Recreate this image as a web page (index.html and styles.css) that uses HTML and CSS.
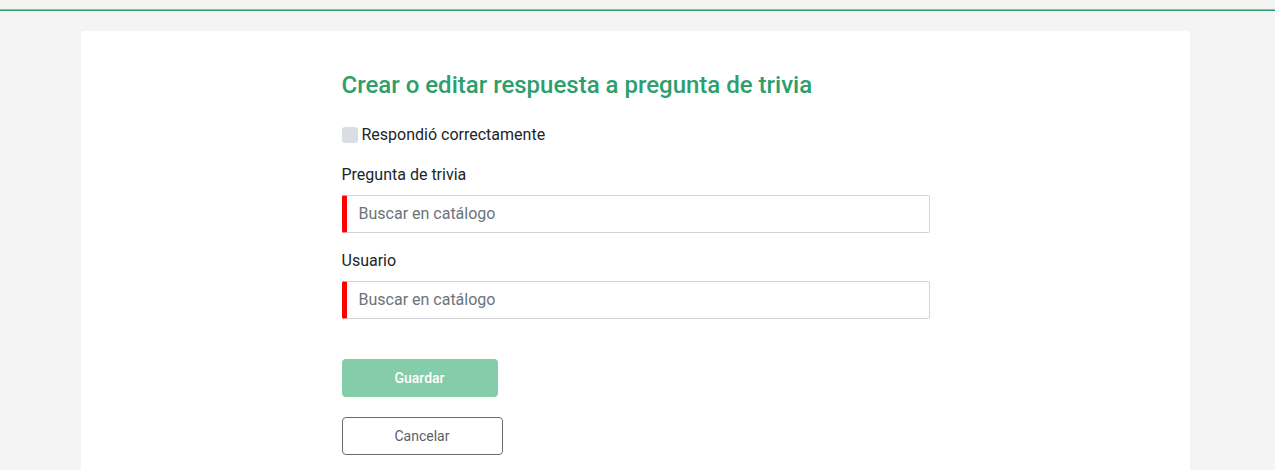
FILE: index.html
```html
<!DOCTYPE html>
<html lang="es">
<head>
<meta charset="utf-8">
<title>Crear o editar respuesta</title>
<link rel="stylesheet" href="styles.css">
</head>
<body>
<div class="topbar"></div>
<div class="topbar-accent"></div>
<main class="card">
  <form class="form">
    <h1 class="title">Crear o editar respuesta a pregunta de trivia</h1>
    <label class="check-row">
      <span class="checkbox"></span>
      <span>Respondió correctamente</span>
    </label>
    <div class="field">
      <label class="field-label">Pregunta de trivia</label>
      <input class="field-input" type="text" placeholder="Buscar en catálogo">
    </div>
    <div class="field">
      <label class="field-label">Usuario</label>
      <input class="field-input" type="text" placeholder="Buscar en catálogo">
    </div>
    <div class="actions">
      <button type="button" class="btn btn-primary">Guardar</button>
      <button type="button" class="btn btn-outline">Cancelar</button>
    </div>
  </form>
</main>
</body>
</html>
```
FILE: styles.css
```css
* { box-sizing: border-box; }
html, body { margin: 0; padding: 0; }
body {
  background: #f4f4f4;
  font-family: Roboto, "Liberation Sans", sans-serif;
  color: #212529;
  overflow: hidden;
}
.topbar {
  height: 10px;
  border-bottom: 1px solid #a9a9a9;
}
.topbar-accent {
  height: 1px;
  background: #2ea36e;
}
.card {
  background: #ffffff;
  margin: 20px 0 0 81px;
  width: 1109px;
  height: 439px;
  border-radius: 3px 3px 0 0;
  padding-top: 40px;
  display: flex;
  justify-content: center;
  overflow: hidden;
}
.form {
  width: 588px;
  display: flex;
  flex-direction: column;
}
.title {
  margin: 0;
  font-size: 24px;
  line-height: 28px;
  font-weight: 500;
  color: #2e9e6c;
}
.check-row {
  margin-top: 24px;
  display: flex;
  align-items: center;
  font-size: 16px;
  line-height: 24px;
  color: #212529;
}
.checkbox {
  width: 16px;
  height: 16px;
  border-radius: 3px;
  background: #dadde3;
  margin-right: 4px;
}
.field {
  margin-top: 16px;
  display: flex;
  flex-direction: column;
}
.field-label {
  font-size: 16px;
  line-height: 24px;
  color: #212529;
  margin-bottom: 8px;
}
.field-input {
  height: 38px;
  width: 100%;
  border: 1px solid #d3d4d8;
  border-left: 5px solid #ff0000;
  border-radius: 2px;
  padding: 0 12px 1px;
  font-family: Roboto, "Liberation Sans", sans-serif;
  font-size: 16px;
  color: #212529;
  background: #fff;
  outline: none;
}
.field-input::placeholder { color: #6c737c; }
.actions {
  margin-top: 40px;
  display: flex;
  flex-direction: column;
  align-items: flex-start;
  gap: 20px;
}
.btn {
  font-family: Roboto, "Liberation Sans", sans-serif;
  font-size: 14px;
  height: 38px;
  border-radius: 4px;
  cursor: pointer;
  padding: 0;
}
.btn-primary {
  width: 156px;
  background: #85cdaa;
  border: none;
  color: #ffffff;
  font-weight: 500;
}
.btn-outline {
  width: 161px;
  background: #ffffff;
  border: 1px solid #6c6c6c;
  color: #5a5f66;
  font-weight: 400;
}
```
